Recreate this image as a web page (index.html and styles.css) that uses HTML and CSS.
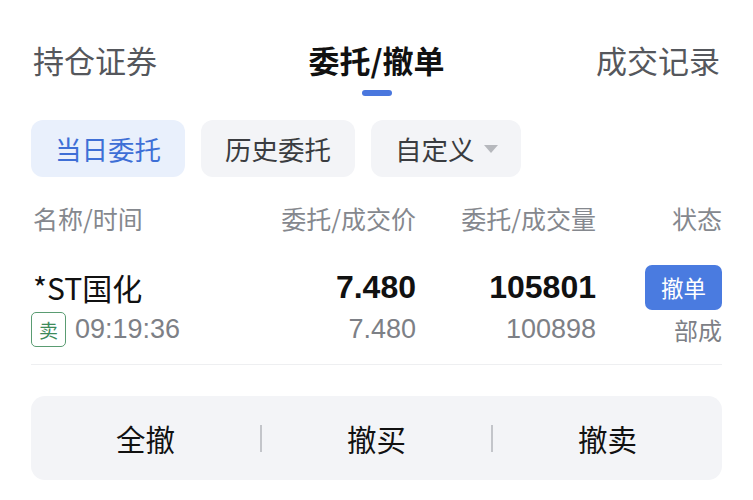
FILE: index.html
```html
<!DOCTYPE html>
<html lang="zh-CN">
<head>
    <meta charset="UTF-8">
    <meta name="viewport" content="width=device-width, initial-scale=1.0">
    <title>委托/撤单</title>
    <link rel="stylesheet" href="styles.css">
</head>
<body>
    <nav class="tabs">
        <span class="tab">持仓证券</span>
        <span class="tab tab-activo">委托/撤单</span>
        <span class="tab">成交记录</span>
    </nav>

    <div class="filtros">
        <span class="chip chip-activo">当日委托</span>
        <span class="chip">历史委托</span>
        <span class="chip chip-menu">自定义<i class="triangulo"></i></span>
    </div>

    <div class="cabecera">
        <span class="col-nombre">名称/时间</span>
        <span class="col-precio">委托/成交价</span>
        <span class="col-cantidad">委托/成交量</span>
        <span class="col-estado">状态</span>
    </div>

    <div class="fila">
        <div class="linea">
            <span class="col-nombre nombre">*ST国化</span>
            <span class="col-precio fuerte">7.480</span>
            <span class="col-cantidad fuerte">105801</span>
            <span class="col-estado"><button class="btn-cancelar">撤单</button></span>
        </div>
        <div class="linea linea-sub">
            <span class="col-nombre"><em class="tipo">卖</em>09:19:36</span>
            <span class="col-precio">7.480</span>
            <span class="col-cantidad">100898</span>
            <span class="col-estado">部成</span>
        </div>
    </div>

    <div class="acciones">
        <span class="accion">全撤</span>
        <span class="sep"></span>
        <span class="accion">撤买</span>
        <span class="sep"></span>
        <span class="accion">撤卖</span>
    </div>
</body>
</html>
```

FILE: styles.css
```css
/* pantalla de委托 - estilos basicos */
body {
    margin: 0;
    background: #ffffff;
    font-family: "Noto Sans CJK SC", "Noto Sans", sans-serif;
    color: #111111;
}
.tabs {
    display: flex;
    justify-content: space-between;
    padding: 40px 33px 0 33px;
}
.tab {
    font-size: 31px;
    line-height: 40px;
    color: #55575c;
    position: relative;
    padding-bottom: 16px;
}
.tab-activo {
    color: #111111;
    font-weight: 700;
}
.tab-activo::after {
    content: "";
    position: absolute;
    left: 50%;
    bottom: 0;
    width: 30px;
    height: 6px;
    margin-left: -15px;
    border-radius: 3px;
    background: #4a77de;
}
.filtros {
    display: flex;
    gap: 16px;
    padding: 24px 31px 0 31px;
}
.chip {
    display: flex;
    align-items: center;
    height: 57px;
    padding: 0 24px;
    border-radius: 12px;
    background: #f3f4f7;
    color: #3a3c40;
    font-size: 26.5px;
}
.chip-activo {
    background: #e9f0fc;
    color: #3e6fd6;
}
.chip-menu {
    padding-right: 23px;
}
.triangulo {
    display: inline-block;
    margin-left: 9px;
    border-left: 7px solid transparent;
    border-right: 7px solid transparent;
    border-top: 8px solid #b6b8bd;
}
.cabecera, .linea {
    display: flex;
    align-items: center;
    padding: 0 31px 0 33px;
}
.cabecera {
    margin-top: 21px;
    height: 40px;
    font-size: 25px;
    color: #85888e;
}
.col-nombre {
    flex: 1;
    display: flex;
    align-items: center;
}
.col-precio {
    width: 180px;
    text-align: right;
}
.col-cantidad {
    width: 180px;
    text-align: right;
}
.col-estado {
    width: 126px;
    text-align: right;
    display: flex;
    justify-content: flex-end;
}
.fila {
    margin: 24px 31px 0 31px;
    border-bottom: 1px solid #eeeff1;
    padding-bottom: 18px;
}
.fila .linea {
    padding: 0 0 0 2px;
}
.linea {
    height: 50px;
    font-size: 30px;
}
.nombre {
    color: #111111;
}
.fuerte {
    font-family: "Liberation Sans", sans-serif;
    font-weight: 700;
    font-size: 32px;
}
.btn-cancelar {
    width: 77px;
    height: 45px;
    border: 0;
    border-radius: 7px;
    background: #4a7be0;
    color: #ffffff;
    font-family: "Noto Sans CJK SC", sans-serif;
    font-size: 22.5px;
    padding: 0;
}
.linea-sub {
    height: 34px;
    font-size: 24px;
    color: #7d8086;
}
.linea-sub .col-precio, .linea-sub .col-cantidad {
    font-family: "Liberation Sans", sans-serif;
    font-size: 27px;
}
.linea-sub .col-nombre {
    font-family: "Liberation Sans", "Noto Sans CJK SC", sans-serif;
    font-size: 27px;
}
.tipo {
    font-style: normal;
    font-family: "Noto Sans CJK SC", sans-serif;
    font-size: 19px;
    color: #3d8a5a;
    border: 1px solid #5a9c72;
    border-radius: 5px;
    width: 33px;
    height: 33px;
    display: flex;
    align-items: center;
    justify-content: center;
    margin: 0 9px 0 -2px;
}
.acciones {
    display: flex;
    align-items: center;
    margin: 31px 31px 0 31px;
    height: 84px;
    border-radius: 14px;
    background: #f3f4f7;
}
.accion {
    flex: 1;
    text-align: center;
    font-size: 29.5px;
    color: #111111;
}
.sep {
    width: 2px;
    height: 27px;
    background: #c3c5ca;
}
```
